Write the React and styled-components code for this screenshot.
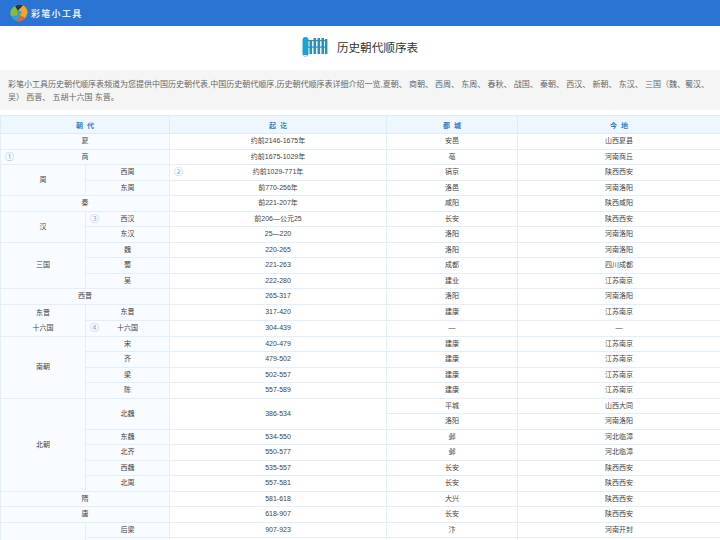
import React from "react";
import styled, { createGlobalStyle } from "styled-components";

const GlobalStyle = createGlobalStyle`
  html, body {
    margin: 0;
    padding: 0;
    height: 540px;
    overflow: hidden;
    background: #fff;
    font-family: "Liberation Sans", "Noto Sans CJK SC", sans-serif;
  }
`;

const TopBar = styled.header`
  height: 26px;
  background: #2b74d4;
  display: flex;
  align-items: center;
  padding-left: 10px;
  gap: 3px;
`;

const BrandName = styled.span`
  color: #dfeafa;
  font-size: 9px;
  font-weight: 700;
  letter-spacing: 1.3px;
`;

const TitleRow = styled.div`
  height: 44px;
  box-sizing: border-box;
  padding-bottom: 2px;
  display: flex;
  align-items: center;
  justify-content: center;
  gap: 9px;
`;

const Title = styled.h1`
  margin: 0;
  font-size: 11.6px;
  font-weight: 400;
  color: #333;
`;

const Intro = styled.p`
  margin: 0 0 5px;
  height: 40px;
  box-sizing: border-box;
  padding: 8px 8px 0;
  background: #f5f5f5;
  color: #666;
  font-size: 8px;
  line-height: 13px;
`;

const Table = styled.table`
  width: 720px;
  border-collapse: collapse;
  table-layout: fixed;
  font-size: 7px;
  color: #444;
`;

const Head = styled.th`
  height: 17px;
  padding: 0;
  background: #eef7ff;
  border: 1px solid #deecf8;
  color: #2f80c8;
  font-size: 7px;
  font-weight: 700;
  word-spacing: 2px;
`;

const Cell = styled.td`
  position: relative;
  height: 14.5px;
  padding: 0;
  text-align: center;
  line-height: 14px;
  border: 1px solid #e2eef8;
  background: ${({ $tint }) => ($tint ? "#f8fbff" : "#fff")};
`;

const Note = styled.span`
  position: absolute;
  left: 4px;
  top: 0;
  color: #7fb2dc;
  font-size: 9px;
  font-weight: 400;
`;

const TwoLines = styled.span`
  display: block;
  line-height: 15.5px;
`;

function Dynasty({ children, note, ...rest }) {
  return (
    <Cell $tint {...rest}>
      {note && <Note>{note}</Note>}
      {children}
    </Cell>
  );
}

function Place({ note, children }) {
  return (
    <Cell>
      {note && <Note>{note}</Note>}
      {children}
    </Cell>
  );
}

function Logo() {
  return (
    <svg width="18" height="18" viewBox="0 0 18 18">
      <circle cx="9" cy="9" r="8.5" fill="#2f9fd8" />
      <path d="M5 2.2A8.5 8.5 0 0 1 13 1.5L10.5 7 7.5 6.5z" fill="#26364a" />
      <path d="M1.5 5 5 2.2l2.5 4.3L7 11.5 1 12a8.5 8.5 0 0 1 .5-7z" fill="#8dbb2e" />
      <path d="M13 1.5A8.5 8.5 0 0 1 17.5 9L15 14 9.5 11 12.5 8 8 6.5z" fill="#f5a623" />
      <path d="M9.5 11l5.5 3-4 3.4-3.5.1z" fill="#e8622a" />
    </svg>
  );
}

function ScrollIcon() {
  return (
    <svg width="26" height="23" viewBox="0 0 26 23">
      <path d="M0.5 4a3 3 0 0 1 6 0v13.5a3 3 0 0 1-6 0z" fill="#19a3d6" />
      <path d="M1.5 19.5h4" stroke="#fff" strokeWidth="0.8" />
      <g fill="#2b8fc0">
        <rect x="7.5" y="4" width="2.6" height="14" />
        <rect x="11.5" y="2" width="2.6" height="16" />
        <rect x="15.5" y="2" width="2.6" height="16" />
        <rect x="19.5" y="2" width="2.6" height="16" />
        <rect x="23" y="3" width="2.4" height="15" />
        <rect x="6" y="4" width="19" height="1.2" />
        <rect x="6" y="10.5" width="19" height="1.2" />
      </g>
    </svg>
  );
}

const rows = [
  [<Dynasty key="a" colSpan={2}>夏</Dynasty>, "约前2146-1675年", "安邑", "山西夏县"],
  [<Dynasty key="a" colSpan={2} note="①">商</Dynasty>, "约前1675-1029年", "亳", "河南商丘"],
  [<Dynasty key="a" rowSpan={2}>周</Dynasty>, <Dynasty key="b">西周</Dynasty>, "约前1029-771年", "镐京", "陕西西安", "②"],
  [<Dynasty key="b">东周</Dynasty>, "前770-256年", "洛邑", "河南洛阳"],
  [<Dynasty key="a" colSpan={2}>秦</Dynasty>, "前221-207年", "咸阳", "陕西咸阳"],
  [<Dynasty key="a" rowSpan={2}>汉</Dynasty>, <Dynasty key="b" note="③">西汉</Dynasty>, "前206—公元25", "长安", "陕西西安"],
  [<Dynasty key="b">东汉</Dynasty>, "25—220", "洛阳", "河南洛阳"],
  [<Dynasty key="a" rowSpan={3}>三国</Dynasty>, <Dynasty key="b">魏</Dynasty>, "220-265", "洛阳", "河南洛阳"],
  [<Dynasty key="b">蜀</Dynasty>, "221-263", "成都", "四川成都"],
  [<Dynasty key="b">吴</Dynasty>, "222-280", "建业", "江苏南京"],
  [<Dynasty key="a" colSpan={2}>西晋</Dynasty>, "265-317", "洛阳", "河南洛阳"],
  [<Dynasty key="a" rowSpan={2}><TwoLines>东晋</TwoLines><TwoLines>十六国</TwoLines></Dynasty>, <Dynasty key="b">东晋</Dynasty>, "317-420", "建康", "江苏南京"],
  [<Dynasty key="b" note="④">十六国</Dynasty>, "304-439", "—", "—"],
  [<Dynasty key="a" rowSpan={4}>南朝</Dynasty>, <Dynasty key="b">宋</Dynasty>, "420-479", "建康", "江苏南京"],
  [<Dynasty key="b">齐</Dynasty>, "479-502", "建康", "江苏南京"],
  [<Dynasty key="b">梁</Dynasty>, "502-557", "建康", "江苏南京"],
  [<Dynasty key="b">陈</Dynasty>, "557-589", "建康", "江苏南京"],
  [<Dynasty key="a" rowSpan={6}>北朝</Dynasty>, <Dynasty key="b" rowSpan={2}>北魏</Dynasty>, <Cell key="c" rowSpan={2}>386-534</Cell>, "平城", "山西大同"],
  ["洛阳", "河南洛阳"],
  [<Dynasty key="b">东魏</Dynasty>, "534-550", "邺", "河北临漳"],
  [<Dynasty key="b">北齐</Dynasty>, "550-577", "邺", "河北临漳"],
  [<Dynasty key="b">西魏</Dynasty>, "535-557", "长安", "陕西西安"],
  [<Dynasty key="b">北周</Dynasty>, "557-581", "长安", "陕西西安"],
  [<Dynasty key="a" colSpan={2}>隋</Dynasty>, "581-618", "大兴", "陕西西安"],
  [<Dynasty key="a" colSpan={2}>唐</Dynasty>, "618-907", "长安", "陕西西安"],
  [<Dynasty key="a" rowSpan={2} />, <Dynasty key="b">后梁</Dynasty>, "907-923", "汴", "河南开封"],
  [<Dynasty key="b" />, "", "", ""],
];

function renderRow(row, i) {
  const note = row.length === 6 ? row[5] : null;
  const cells = note ? row.slice(0, 5) : row;
  const firstPlain = cells.findIndex((c) => typeof c === "string");
  return (
    <tr key={i}>
      {cells.map((c, j) =>
        typeof c === "string" ? (
          <Place key={j} note={j === firstPlain ? note : null}>{c}</Place>
        ) : (
          c
        )
      )}
    </tr>
  );
}

export default function App() {
  return (
    <>
      <GlobalStyle />
      <TopBar>
        <Logo />
        <BrandName>彩笔小工具</BrandName>
      </TopBar>
      <TitleRow>
        <ScrollIcon />
        <Title>历史朝代顺序表</Title>
      </TitleRow>
      <Intro>
        彩笔小工具历史朝代顺序表频道为您提供中国历史朝代表,中国历史朝代顺序,历史朝代顺序表详细介绍一览,夏朝、 商朝、 西周、 东周、 春秋、 战国、 秦朝、 西汉、 新朝、 东汉、 三国（魏、蜀汉、吴） 西晋、 五胡十六国 东晋。
      </Intro>
      <Table>
        <colgroup>
          <col style={{ width: 85 }} />
          <col style={{ width: 84 }} />
          <col style={{ width: 217 }} />
          <col style={{ width: 131 }} />
          <col style={{ width: 203 }} />
        </colgroup>
        <thead>
          <tr>
            <Head colSpan={2}>朝 代</Head>
            <Head>起 讫</Head>
            <Head>都 城</Head>
            <Head>今 地</Head>
          </tr>
        </thead>
        <tbody>{rows.map(renderRow)}</tbody>
      </Table>
    </>
  );
}
